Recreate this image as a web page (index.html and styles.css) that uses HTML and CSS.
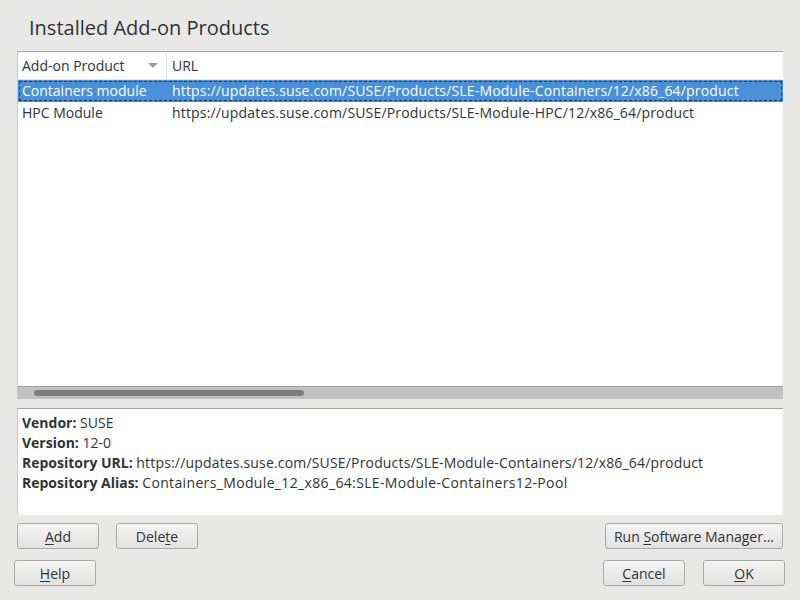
FILE: index.html
```html
<!DOCTYPE html>
<html lang="en">
<head>
    <meta charset="UTF-8">
    <title>Installed Add-on Products</title>
    <link rel="stylesheet" href="styles.css">
</head>
<body>
    <div class="dialog">
        <h1>Installed Add-on Products</h1>

        <div class="table-frame">
            <div class="table-view">
                <div class="row header">
                    <div class="cell col-product">
                        <span>Add-on Product</span>
                        <svg class="sort-arrow" width="10" height="6" viewBox="0 0 10 6"><path d="M0 0 L10 0 L5 5 Z" fill="#9a9c9c"/></svg>
                    </div>
                    <div class="cell col-url">URL</div>
                </div>
                <div class="row selected">
                    <div class="cell col-product">Containers module</div>
                    <div class="cell col-url url">https://updates.suse.com/SUSE/Products/SLE-Module-Containers/12/x86_64/product</div>
                </div>
                <div class="row">
                    <div class="cell col-product">HPC Module</div>
                    <div class="cell col-url url">https://updates.suse.com/SUSE/Products/SLE-Module-HPC/12/x86_64/product</div>
                </div>
            </div>
            <div class="hscroll">
                <div class="thumb"></div>
            </div>
        </div>

        <div class="details">
            <p><b>Vendor:</b> SUSE</p>
            <p><b>Version:</b> 12-0</p>
            <p><b>Repository URL:</b> <span class="url">https://updates.suse.com/SUSE/Products/SLE-Module-Containers/12/x86_64/product</span></p>
            <p><b>Repository Alias:</b> <span class="alias">Containers_Module_12_x86_64:SLE-Module-Containers12-Pool</span></p>
        </div>

        <div class="action-bar">
            <div class="btn-group">
                <button class="btn"><u>A</u>dd</button>
                <button class="btn">Dele<u>t</u>e</button>
            </div>
            <button class="btn wide">Run <u>S</u>oftware Manager...</button>
        </div>

        <div class="footer">
            <button class="btn"><u>H</u>elp</button>
            <div class="btn-group">
                <button class="btn"><u>C</u>ancel</button>
                <button class="btn"><u>O</u>K</button>
            </div>
        </div>
    </div>
</body>
</html>
```

FILE: styles.css
```css
* {
    margin: 0;
    padding: 0;
    box-sizing: border-box;
}

body {
    background: #e8e8e7;
    font-family: 'Open Sans', 'Noto Sans', sans-serif;
    font-size: 14px;
    color: #2e3436;
    width: 800px;
    height: 600px;
    overflow: hidden;
}

.dialog {
    padding: 0 18px 0 17px;
}

h1 {
    font-weight: normal;
    font-size: 20px;
    line-height: 26px;
    padding: 15px 0 0 12px;
    height: 51px;
    color: #2e3436;
}

.table-frame {
    width: 766px;
    height: 348px;
    display: flex;
    flex-direction: column;
    background: #fff;
    border-top: 1px solid #a4a6a6;
    border-left: 1px solid #c8c8c8;
}

.table-view {
    flex: 1;
}

.row {
    display: flex;
    height: 22px;
    line-height: 22px;
    white-space: nowrap;
}

.row.header {
    height: 28px;
    line-height: 27px;
    border-bottom: 1px solid #e4e4e4;
}

.cell {
    padding-left: 4px;
}

.col-product {
    width: 149px;
    display: flex;
    align-items: center;
    justify-content: space-between;
    padding-right: 8px;
}

.header .col-product {
    border-right: 1px solid #e4e4e4;
}

.col-url {
    padding-left: 5px;
}

.url {
    letter-spacing: 0.17px;
}

.alias {
    letter-spacing: 0.35px;
}

.sort-arrow {
    margin-top: 1px;
}

.row.selected {
    background: #4a90d9;
    color: #fff;
    outline: 1px dashed #1f3855;
    outline-offset: -2px;
}

.hscroll {
    height: 13px;
    background: #c0c1c0;
    border-top: 1px solid #9fa1a1;
    display: flex;
    align-items: center;
    padding-left: 16px;
}

.thumb {
    width: 270px;
    height: 6px;
    border-radius: 3px;
    background: #7b7e7e;
}

.details {
    margin-top: 9px;
    width: 766px;
    height: 107px;
    background: #fff;
    border-top: 1px solid #a4a6a6;
    border-left: 1px solid #c8c8c8;
    padding: 4px 4px;
}

.details p {
    line-height: 20px;
}

.details b {
    font-weight: bold;
}

.btn {
    font-family: inherit;
    font-size: 14px;
    color: #2e3436;
    height: 26px;
    min-width: 82px;
    padding: 0 7px;
    border: 1px solid #a8aaaa;
    border-radius: 3px;
    background: linear-gradient(#f4f4f3, #e2e2e1);
}

.btn.wide {
    padding: 0 8px;
}

.btn u {
    text-underline-offset: 2px;
}

.btn-group {
    display: flex;
    gap: 17px;
}

.action-bar {
    display: flex;
    justify-content: space-between;
    margin-top: 8px;
    width: 766px;
}

.footer {
    display: flex;
    justify-content: space-between;
    margin: 11px -3px 0 -3px;
}

.footer .btn-group {
    gap: 18px;
}
```
